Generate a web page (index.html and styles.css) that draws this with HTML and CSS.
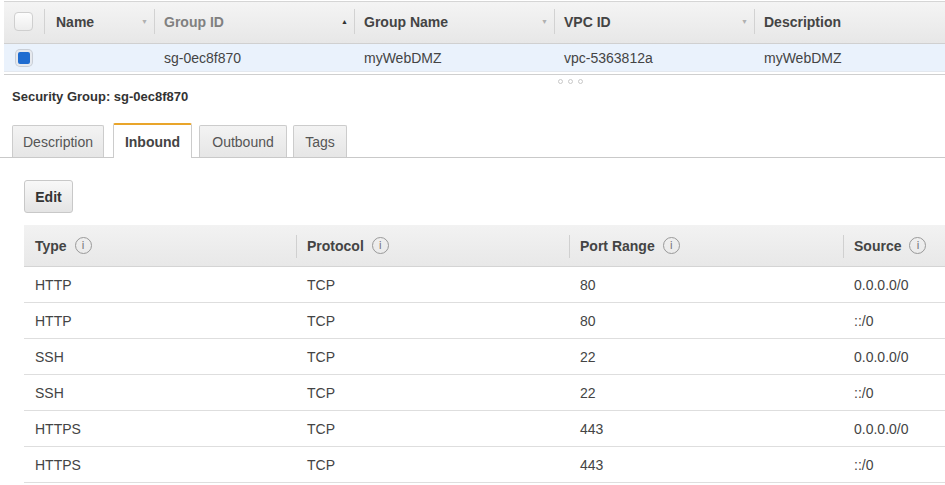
FILE: index.html
```html
<!DOCTYPE html>
<html>
<head>
<meta charset="utf-8">
<link rel="stylesheet" href="styles.css">
</head>
<body>
<div class="grid">
  <div class="grid-head">
    <div class="gcell c-check"><span class="cb"></span></div>
    <div class="gcell c-name"><span class="ht">Name</span><span class="arr">&#9660;</span></div>
    <div class="gcell c-col"><span class="ht sorted">Group ID</span><span class="arr up">&#9650;</span></div>
    <div class="gcell c-col"><span class="ht">Group Name</span><span class="arr">&#9660;</span></div>
    <div class="gcell c-col"><span class="ht">VPC ID</span><span class="arr">&#9660;</span></div>
    <div class="gcell c-last"><span class="ht">Description</span></div>
  </div>
  <div class="grid-row">
    <div class="gcell c-check"><span class="cb on"></span></div>
    <div class="gcell c-name"></div>
    <div class="gcell c-col">sg-0ec8f870</div>
    <div class="gcell c-col">myWebDMZ</div>
    <div class="gcell c-col">vpc-5363812a</div>
    <div class="gcell c-last">myWebDMZ</div>
  </div>
</div>
<div class="splitter"><span class="dot"></span><span class="dot"></span><span class="dot"></span></div>
<div class="sg-title">Security Group: sg-0ec8f870</div>
<div class="tabs">
  <div class="tab t-desc">Description</div>
  <div class="tab active t-in">Inbound</div>
  <div class="tab t-out">Outbound</div>
  <div class="tab t-tags">Tags</div>
</div>
<div class="panel">
  <button class="btn">Edit</button>
  <div class="rules">
    <div class="rhead">
      <div class="rc">Type <span class="info">i</span></div>
      <div class="rc sep">Protocol <span class="info">i</span></div>
      <div class="rc sep">Port Range <span class="info">i</span></div>
      <div class="rc sep">Source <span class="info">i</span></div>
    </div>
    <div class="rrow"><div class="rc">HTTP</div><div class="rc">TCP</div><div class="rc">80</div><div class="rc">0.0.0.0/0</div></div>
    <div class="rrow"><div class="rc">HTTP</div><div class="rc">TCP</div><div class="rc">80</div><div class="rc">::/0</div></div>
    <div class="rrow"><div class="rc">SSH</div><div class="rc">TCP</div><div class="rc">22</div><div class="rc">0.0.0.0/0</div></div>
    <div class="rrow"><div class="rc">SSH</div><div class="rc">TCP</div><div class="rc">22</div><div class="rc">::/0</div></div>
    <div class="rrow"><div class="rc">HTTPS</div><div class="rc">TCP</div><div class="rc">443</div><div class="rc">0.0.0.0/0</div></div>
    <div class="rrow"><div class="rc">HTTPS</div><div class="rc">TCP</div><div class="rc">443</div><div class="rc">::/0</div></div>
  </div>
</div>
</body>
</html>
```

FILE: styles.css
```css
html, body {
  margin: 0;
  padding: 0;
  background: #fff;
  overflow: hidden;
  width: 945px;
  height: 485px;
  font-family: "Liberation Sans", Arial, sans-serif;
  font-size: 14px;
  color: #444;
}

.grid {
  margin: 1px 0 0 4px;
  border-top: 1px solid #d5d5d5;
  border-bottom: 1px solid #cfcfcf;
  height: 74px;
  box-sizing: border-box;
}

.grid-head {
  display: flex;
  height: 42px;
  background: linear-gradient(#f4f4f4, #e7e7e7);
  border-bottom: 1px solid #d0d0d0;
  box-sizing: border-box;
}

.grid-row {
  display: flex;
  height: 28px;
  background: #eaf2fc;
  border-bottom: 1px solid #e4e8ee;
  box-sizing: border-box;
}

.gcell {
  display: flex;
  align-items: center;
  box-sizing: border-box;
  padding-left: 10px;
  white-space: nowrap;
}

.grid-head .gcell {
  position: relative;
  padding-bottom: 2px;
}

.grid-head .gcell + .gcell::before {
  content: "";
  position: absolute;
  left: 0;
  top: 7px;
  bottom: 9px;
  width: 1px;
  background: #d2d2d2;
}

.c-check { width: 40px; padding-left: 10px; }
.c-name { width: 110px; padding-left: 12px; }
.c-col { width: 200px; }
.c-last { flex: 1; }

.ht {
  font-weight: bold;
  color: #444;
}

.ht.sorted { color: #808080; }

.arr {
  margin-left: auto;
  margin-right: 6px;
  font-size: 7px;
  color: #b0b0b0;
}

.arr.up { color: #333; }

.cb {
  display: block;
  width: 17px;
  height: 17px;
  border: 1px solid #cfcfcf;
  border-radius: 4px;
  background: linear-gradient(#fdfdfd, #ededed);
}

.cb.on {
  width: 12px;
  height: 12px;
  margin-left: 2px;
  border: 2px solid #e6e9ee;
  border-radius: 4px;
  background: #1f6cd0;
  box-shadow: 0 0 0 1px #c9ced6;
}

.splitter {
  display: flex;
  justify-content: center;
  gap: 5px;
  padding-left: 196px;
  height: 10px;
  align-items: center;
  margin-top: 1px;
}

.dot {
  width: 3px;
  height: 3px;
  border: 1px solid #c8c8c8;
  border-radius: 50%;
}

.sg-title {
  margin: 3px 0 0 12px;
  font-weight: bold;
  font-size: 13px;
  color: #333;
  line-height: 16px;
}

.tabs {
  display: flex;
  gap: 7px;
  margin-top: 19px;
  padding-left: 12px;
  border-bottom: 1px solid #c9c9c9;
  height: 34px;
  box-sizing: border-box;
  align-items: flex-end;
}

.tab {
  height: 32px;
  box-sizing: border-box;
  padding: 0;
  display: flex;
  align-items: center;
  justify-content: center;
  background: linear-gradient(#f3f3f3, #e6e6e6);
  border: 1px solid #cccccc;
  border-bottom: none;
  border-radius: 2px 2px 0 0;
  color: #555;
}

.t-desc { width: 92px; margin-right: 2px; }
.t-in { width: 79px; }
.t-out { width: 88px; margin-right: -1px; }
.t-tags { width: 54px; }

.tab.active {
  background: #fff;
  border-top: 2px solid #e9a52a;
  font-weight: bold;
  color: #444;
  margin-bottom: -1px;
  height: 35px;
}

.panel {
  padding: 22px 0 0 24px;
}

.btn {
  display: block;
  width: 49px;
  height: 33px;
  border: 1px solid #c8c8c8;
  border-radius: 3px;
  background: linear-gradient(#f8f8f8, #e4e4e4);
  font-family: "Liberation Sans", Arial, sans-serif;
  font-size: 14px;
  font-weight: bold;
  color: #333;
  padding: 0;
}

.rules {
  margin-top: 12px;
  width: 1100px;
}

.rhead {
  display: flex;
  height: 41px;
  background: linear-gradient(#f2f2f2, #e8e8e8);
  border-bottom: 1px solid #d4d4d4;
}

.rrow {
  display: flex;
  height: 36px;
  border-bottom: 1px solid #dedede;
  box-sizing: border-box;
}

.rc {
  width: 273px;
  flex: none;
  display: flex;
  align-items: center;
  padding-left: 11px;
  box-sizing: border-box;
  white-space: nowrap;
}

.rc:first-child { width: 272px; }
.rrow .rc:nth-child(3) { width: 274px; }
.rhead .rc:nth-child(3) { width: 274px; }

.rhead .rc {
  font-weight: bold;
  color: #444;
  position: relative;
}

.rc.sep::before {
  content: "";
  position: absolute;
  left: 0;
  top: 10px;
  bottom: 8px;
  width: 1px;
  background: #d0d0d0;
}

.info {
  display: inline-flex;
  align-items: center;
  justify-content: center;
  width: 15px;
  height: 15px;
  margin-left: 8px;
  border: 1px solid #999;
  border-radius: 50%;
  font-family: "DejaVu Sans", sans-serif;
  font-size: 11px;
  font-weight: normal;
  color: #777;
}
```
